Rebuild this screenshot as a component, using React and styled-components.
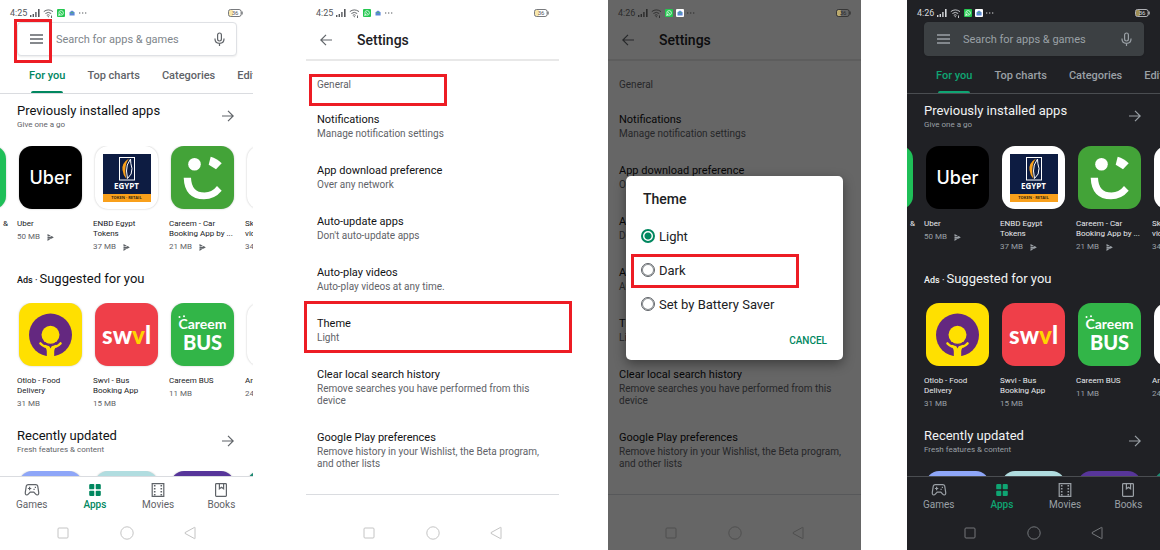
import React from "react";
import styled, { createGlobalStyle, ThemeProvider, css } from "styled-components";

const light = {
  bg: "#ffffff", search: "#ffffff", searchEdge: "#dfe1e5", title: "#111214", text: "#202124",
  muted: "#5f6368", placeholder: "#80868b", line: "#dadce0", accent: "#01875f", sys: "#c4c4c4",
  status: "#55585c", cardShadow: "0 0 2px rgba(0,0,0,.25)",
};
const dark = {
  bg: "#202125", search: "#3c4043", searchEdge: "#3c4043", title: "#f1f3f4", text: "#e8eaed",
  muted: "#9aa0a6", placeholder: "#9aa0a6", line: "#4a4d51", accent: "#0fa573", sys: "#74777b",
  status: "#d5d7da", cardShadow: "none",
};

const GlobalStyle = createGlobalStyle`
  * { box-sizing: border-box; }
  body { margin: 0; background: #fff; font-family: Roboto, "Liberation Sans", sans-serif; }
  button, input { font: inherit; color: inherit; }
  button { padding: 0; border: 0; background: none; cursor: pointer; }
  h1, h2, p { margin: 0; }
  svg { display: block; flex: none; }
`;

const Board = styled.main`
  display: flex;
  align-items: stretch;
`;

const Phone = styled.section`
  position: relative;
  flex: 1 1 0;
  min-width: 0;
  margin-left: ${(p) => p.$gap || 0}px;
  display: flex;
  flex-direction: column;
  background: ${(p) => p.theme.bg};
  color: ${(p) => p.theme.text};
`;

const Marker = styled.span`
  position: absolute;
  z-index: 3;
  inset: ${(p) => p.$inset};
  width: ${(p) => p.$width || "auto"};
  border: 3px solid #ed1c24;
  pointer-events: none;
`;

/* ---------- status and system bars ---------- */

const StatusRow = styled.div`
  position: relative;
  z-index: 2;
  height: 22px;
  padding: 4px 10px 0;
  display: flex;
  align-items: center;
  gap: 3px;
  font-size: 9px;
  line-height: 12px;
  color: ${(p) => (p.$dim ? "#2b2b2b" : p.theme.status)};
`;
const Spacer = styled.span`
  flex: 1;
`;

function StatusBar({ time, dim }) {
  return (
    <StatusRow $dim={dim}>
      <span>{time}</span>
      <svg width="10" height="8" viewBox="0 0 10 8" fill="currentColor">
        <path d="M0 6h1.4v2H0zM2.6 5H4v3H2.6zM5.2 3h1.4v5H5.2zM8 0h1.6v8H8z" />
      </svg>
      <svg width="11" height="9" viewBox="0 0 11 9" fill="none" stroke="currentColor">
        <path d="M.8 2.6Q5.3-.8 10 2.6M2.4 4.5Q5.3 2.2 8.2 4.5M3.8 6.3Q5.3 5.2 6.6 6.3" strokeWidth=".9" />
        <path d="M4.4 7.2h1.8L5.3 8.600zM8 6.400h.9V9H8z" fill="currentColor" stroke="none" />
      </svg>
      <svg width="8" height="8" viewBox="0 0 8 8">
        <rect width="8" height="8" rx="1" fill="#25c750" />
        <circle cx="4.1" cy="3.9" r="2.3" fill="none" stroke="#e9fff0" strokeWidth=".8" />
        <path d="M1.5 6.6l.5-1.5 1 1zM3.1 3q.4 1.5 1.9 1.9" fill="none" stroke="#e9fff0" strokeWidth=".7" />
      </svg>
      <svg width="8" height="8" viewBox="0 0 8 8">
        <rect width="8" height="8" rx="1" fill="#fff" />
        <path d="M1.5 3.2L4 1.4l2.6 1.8v3.2H1.5z" fill="#5b86d8" />
        <path d="M2.6 3.2h2.8v1H2.6z" fill="#50b070" />
      </svg>
      <svg width="8" height="2" viewBox="0 0 8 2" fill="currentColor">
        <path d="M0 .5h1.300v1H0zM3 .5h1.300v1H3zM6 .5h1.300v1H6z" />
      </svg>
      <Spacer />
      <svg width="15" height="8" viewBox="0 0 15 8">
        <rect x="1" y="1" width="4" height="6" rx="1" fill="#f3d774" opacity=".6" />
        <rect x=".5" y=".5" width="12.6" height="7" rx="2" fill="none" stroke="currentColor" strokeWidth=".8" />
        <path d="M13.6 2.6h1v2.8h-1z" fill="currentColor" />
        <text x="7" y="6.200" fontSize="6" textAnchor="middle" fill="currentColor">36</text>
      </svg>
    </StatusRow>
  );
}

const SystemRow = styled.div`
  height: 35px;
  padding: 0 12.5%;
  display: grid;
  grid-template-columns: repeat(3, 1fr);
  color: ${(p) => (p.theme.sys)};
  button { display: grid; place-items: center; }
`;

function SystemBar() {
  const pic = { width: 14, height: 14, viewBox: "0 0 14 14", fill: "none", stroke: "currentColor" };
  return (
    <SystemRow>
      <button aria-label="Recent"><svg {...pic}><rect x="2" y="2" width="10" height="10" rx="1" /></svg></button>
      <button aria-label="Home"><svg {...pic}><circle cx="7" cy="7" r="6.2" /></svg></button>
      <button aria-label="Back"><svg {...pic}><path d="M12 1.6v10.8q0 .5-.5.2L2 7.4q-.6-.4 0-.8l9.500-5.200q.5-.3.5.2z" /></svg></button>
    </SystemRow>
  );
}

/* ---------- store screen ---------- */

const SearchBar = styled.div`
  position: relative;
  height: 34px;
  margin: 0 16px 0 17px;
  padding: 0 10px 0 12px;
  display: flex;
  align-items: center;
  gap: 13px;
  border: 1px solid ${(p) => p.theme.searchEdge};
  border-radius: 4px;
  background: ${(p) => p.theme.search};
  color: ${(p) => p.theme.muted};
  box-shadow: 0 1px 2px rgba(0, 0, 0, 0.08);
`;
const SearchInput = styled.input`
  flex: 1;
  min-width: 0;
  width: 0;
  padding: 0;
  border: 0;
  outline: 0;
  background: none;
  font-size: 11px;
  &::placeholder { color: ${(p) => p.theme.placeholder}; opacity: 1; }
`;

const Tabs = styled.nav`
  height: 38px;
  padding-left: 29px;
  display: flex;
  gap: 22px;
  overflow: hidden;
  border-bottom: 1px solid ${(p) => p.theme.line};
`;
const Tab = styled.button`
  position: relative;
  flex: none;
  font-size: 11px;
  line-height: 16px;
  padding-top: 2px;
  font-weight: 500;
  color: ${(p) => (p.$active ? p.theme.accent : p.theme.muted)};
  ${(p) => p.$active && css`
    &::after {
      content: "";
      position: absolute;
      inset: auto 2px 0 2px;
      height: 2px;
      border-radius: 2px 2px 0 0;
      background: ${p.theme.accent};
    }
  `}
`;

const SectionHead = styled.header`
  padding: ${(p) => p.$top}px 19px 0 17px;
  margin-bottom: ${(p) => p.$bottom}px;
  display: flex;
  align-items: center;
  justify-content: space-between;
  color: ${(p) => p.theme.muted};
`;
const SectionTitle = styled.h2`
  height: 18px;
  display: flex;
  align-items: baseline;
  gap: 2px;
  font-size: 13px;
  line-height: 18px;
  font-weight: 400;
  white-space: nowrap;
  color: ${(p) => p.theme.title};
`;
const AdsTag = styled.small`
  font-size: 9px;
  font-weight: 500;
`;
const SectionSub = styled.p`
  font-size: 8px;
  line-height: 10px;
`;

const Carousel = styled.div`
  display: flex;
  overflow: hidden;
  height: ${(p) => p.$height || "auto"};
  padding-left: 17px;
`;
const Card = styled.article`
  flex: 0 0 76px;
`;
const PeekCard = styled.div`
  flex: 0 0 76px;
  margin-left: -76px;
`;
const Tile = styled.div`
  position: relative;
  flex: none;
  width: 63px;
  height: 63px;
  margin-left: 2px;
  margin-right: 11px;
  display: flex;
  flex-direction: column;
  align-items: center;
  justify-content: center;
  border-radius: 13px;
  background: ${(p) => p.$bg};
  color: #fff;
  box-shadow: ${(p) => p.theme.cardShadow};
`;
const CardText = styled.p`
  padding-top: 10px;
  font-size: 8px;
  line-height: 10px;
  white-space: pre;
  text-align: ${(p) => p.$align || "left"};
  margin-right: ${(p) => (p.$align ? 9 : 0)}px;
`;
const CardSize = styled.p`
  padding-top: 3px;
  display: flex;
  align-items: center;
  gap: 7px;
  font-size: 8px;
  line-height: 10px;
  color: ${(p) => p.theme.muted};
`;

const Word = styled.span`
  font-family: ${(p) => p.$font || "Lato"}, sans-serif;
  font-size: ${(p) => p.$size}px;
  line-height: ${(p) => p.$line || p.$size}px;
  font-weight: ${(p) => p.$weight || 700};
`;
const Yellow = styled.span`
  color: #ffd500;
`;
const BusLogo = styled.div`
  position: relative;
  display: flex;
  flex-direction: column;
  align-items: center;
  padding-bottom: 4px;
`;
const BusEyes = styled.svg`
  position: absolute;
  top: 0;
  left: 0;
`;
const Plate = styled.div`
  width: 48px;
  height: 48px;
  display: flex;
  flex-direction: column;
  align-items: center;
  background: #0d1c42;
`;
const PlateFoot = styled.div`
  width: 100%;
  margin-top: auto;
  height: 8px;
  display: grid;
  place-items: center;
  background: #f9a01b;
  color: #33260f;
`;

const art = {
  uber: ["#000", <Word $size={18} $weight={500} $font="Inter">Uber</Word>],
  egypt: ["#fff", (
    <Plate>
      <svg width="18" height="28" viewBox="0 0 18 28">
        <rect x="1.500" y="3.500" width="15" height="22.500" fill="none" stroke="#fff" />
        <path d="M11 4.500Q3.500 9 4.500 16q.5 5 4 9-1.500-5-1.200-9 .2-7 3.700-11.500z" fill="#f9a01b" />
        <path d="M12.500 5q-4.500 6-4 12l1 7.500q5-4 4.500-10-1.500-5-1.500-9.500z" fill="none" stroke="#fff" />
      </svg>
      <Word $size={8} $font="Open Sans">EGYPT</Word>
      <PlateFoot><Word $size={4} $font="Open Sans">TOKEN · RETAIL</Word></PlateFoot>
    </Plate>
  )],
  careem: ["#43a338", (
    <svg width="63" height="63" viewBox="0 0 63 63" fill="#fff">
      <circle cx="23.500" cy="18.300" r="6.300" />
      <path d="M39.700 10.700q6 1.500 11 6.600l-5.700 6-7.300-4.600z" />
      <path d="M12.700 31.700H20q.5 14.800 13.500 14.800 7.500 0 12.500-6.500l4.700 4.700Q43.500 53.300 33 53.300 13.500 53 12.700 31.700z" />
    </svg>
  )],
  otlob: ["#ffe000", (
    <svg width="63" height="63" viewBox="0 0 63 63">
      <circle cx="31.500" cy="32" r="21.500" fill="#642880" />
      <circle cx="31.500" cy="31.800" r="9" fill="#ffe000" />
      <path d="M21.500 40.500q2 2.200 4.500 3M41.500 40.500q-2 2.200-4.500 3" fill="none" stroke="#ffe000" strokeWidth="2.600" strokeLinecap="round" />
      <path d="M24 42.500l5.500-1.500 2 2.200 2-2.200 5.500 1.500q-3.800 2.500-3.800 6V55h-7.400v-6.500q0-3.500-3.800-6z" fill="#ffe000" />
      <path d="M25.500 39.500q2.500 3 6 3t6-3" fill="none" stroke="#642880" strokeWidth="1.800" />
      <path d="M30 42.500h3l-1.500 3z" fill="#642880" />
    </svg>
  )],
  swvl: ["#ef3f49", <Word $size={24} $weight={900}>sw<Yellow>v</Yellow>l</Word>],
  bus: ["#32b548", (
    <BusLogo>
      <BusEyes width="9" height="4" viewBox="0 0 9 4" fill="#fff">
        <circle cx="1.500" cy="2" r="1" /><circle cx="6" cy="1.300" r="1" />
      </BusEyes>
      <Word $size={14} $line={18}>Careem</Word>
      <Word $size={20} $line={18} $weight={900}>BUS</Word>
    </BusLogo>
  )],
};

const PlayMark = () => (
  <svg width="7" height="7" viewBox="0 0 7 7" fill="currentColor">
    <path d="M.5.1L3.800 1.800 2 2.500.5 2.400zM.500 2.900l2.200.1 2.100-.9 2 1.300-2.600 1.300H.500zM.500 5.100h2.900L.500 6.900z" />
  </svg>
);

const ArrowRight = () => (
  <svg width="12" height="12" viewBox="0 0 12 12" fill="none" stroke="currentColor" strokeWidth="1.200">
    <path d="M0 6h11M6 .8L11.200 6 6 11.200" />
  </svg>
);

const AppCard = ({ icon, name, size, mark }) => (
  <Card>
    <Tile $bg={icon ? art[icon][0] : "#fff"}>{icon && art[icon][1]}</Tile>
    <CardText>{name}</CardText>
    <CardSize>{size}{mark && <PlayMark />}</CardSize>
  </Card>
);

const BottomNav = styled.nav`
  height: 39px;
  padding-top: 5px;
  display: grid;
  grid-template-columns: repeat(4, 1fr);
  border-top: 1px solid ${(p) => p.theme.line};
`;
const NavItem = styled.button`
  display: flex;
  flex-direction: column;
  align-items: center;
  font-size: 10px;
  line-height: 14px;
  font-weight: ${(p) => (p.$active ? 500 : 400)};
  color: ${(p) => (p.$active ? p.theme.accent : p.theme.muted)};
`;

const navItems = [
  ["Games", (
    <g fill="none" stroke="currentColor" strokeWidth="1.200">
      <path d="M4.200 2.600h7.600q1.500 0 1.900 1.400l1 6.300q.3 2.700-1.500 2.700-.8 0-1.500-.8l-1.900-2H6.200l-1.900 2q-.7.800-1.500.8-1.800 0-1.500-2.700l1-6.300q.4-1.400 1.900-1.400z" />
      <path d="M5.600 4.800v3.400M3.900 6.500h3.400M9.500 7.300h1.200M10.800 5.400H12" />
    </g>
  )],
  ["Apps", <path d="M3.500 2h3q.8 0 .8.800v3.700q0 .8-.8.800h-3.300q-1 0-1-.9V3.200Q2.200 2 3.500 2zM9.500 2h3q1.300 0 1.300 1.200v3.200q0 .9-1 .9H9.500q-.8 0-.8-.8V2.800q0-.8.800-.8zM3.200 8.700h3.300q.8 0 .8.800v3.700q0 .8-.8.800h-3q-1.300 0-1.300-1.200V9.600q0-.9 1-.9zM9.500 8.700h3.300q1 0 1 .9v3.200q0 1.200-1.300 1.200h-3q-.8 0-.8-.8V9.500q0-.8.800-.8z" fill="currentColor" />],
  ["Movies", (
    <g fill="none" stroke="currentColor" strokeWidth="1.200">
      <path d="M2.200 1.600h11.600v12.800H2.200z" />
      <path d="M4.700 3v10.500M11.300 3v10.500" strokeWidth="1.600" strokeDasharray="1.500 1.500" />
    </g>
  )],
  ["Books", (
    <g fill="none" stroke="currentColor" strokeWidth="1.200">
      <rect x="2.600" y="1.600" width="10.800" height="12.800" rx=".8" />
      <path d="M6.400 1.600v5.200l2.100-1.600 2.100 1.600V1.600" />
    </g>
  )],
];

function StoreScreen({ time, theme, gap, marked }) {
  return (
    <ThemeProvider theme={theme}>
      <Phone $gap={gap}>
        <StatusBar time={time} />
        <SearchBar>
          <button aria-label="Menu">
            <svg width="13" height="10" viewBox="0 0 13 10" fill="none" stroke="currentColor" strokeWidth="1.500">
              <path d="M0 1h13M0 5h13M0 9h13" />
            </svg>
          </button>
          <SearchInput aria-label="Search" placeholder="Search for apps & games" />
          <button aria-label="Voice search">
            <svg width="13" height="15" viewBox="0 0 13 15" fill="none" stroke="currentColor" strokeWidth="1.200">
              <rect x="4.600" y="1" width="3.800" height="8" rx="1.900" />
              <path d="M2 6.500v.6q0 4.300 4.500 4.300T11 7.100v-.6M6.500 11.400V14" />
            </svg>
          </button>
          {marked && <Marker $inset="-4px auto -8px -4px" $width="38px" />}
        </SearchBar>
        <Tabs>
          <Tab $active>For you</Tab>
          <Tab>Top charts</Tab>
          <Tab>Categories</Tab>
          <Tab>Edit</Tab>
        </Tabs>
        <SectionHead $top={8} $bottom={16}>
          <div>
            <SectionTitle>Previously installed apps</SectionTitle>
            <SectionSub>Give one a go</SectionSub>
          </div>
          <ArrowRight />
        </SectionHead>
        <Carousel>
          <PeekCard>
            <Tile $bg="#1fbf58" />
            <CardText $align="right">&amp;</CardText>
          </PeekCard>
          <AppCard icon="uber" name="Uber" size="50 MB" mark />
          <AppCard icon="egypt" name={"ENBD Egypt\nTokens"} size="37 MB" mark />
          <AppCard icon="careem" name={"Careem - Car\nBooking App by ..."} size="21 MB" mark />
          <AppCard name={"Sk\nvid"} size="34" />
        </Carousel>
        <SectionHead $top={18} $bottom={15}>
          <SectionTitle><AdsTag>Ads ·</AdsTag>Suggested for you</SectionTitle>
        </SectionHead>
        <Carousel>
          <AppCard icon="otlob" name={"Otlob - Food\nDelivery"} size="31 MB" />
          <AppCard icon="swvl" name={"Swvl - Bus\nBooking App"} size="15 MB" />
          <AppCard icon="bus" name="Careem BUS" size="11 MB" />
          <AppCard name="An" size="24" />
        </Carousel>
        <SectionHead $top={18} $bottom={16}>
          <div>
            <SectionTitle>Recently updated</SectionTitle>
            <SectionSub>Fresh features &amp; content</SectionSub>
          </div>
          <ArrowRight />
        </SectionHead>
        <Carousel $height="5px">
          <Tile $bg="#8ea6f8" />
          <Tile $bg="#b1dde0" />
          <Tile $bg="#57359a" />
          <Tile $bg="#1b8a72" />
        </Carousel>
        <BottomNav>
          {navItems.map(([label, icon]) => (
            <NavItem key={label} $active={label === "Apps"}>
              <svg width="16" height="16" viewBox="0 0 16 16">{icon}</svg>
              {label}
            </NavItem>
          ))}
        </BottomNav>
        <SystemBar />
      </Phone>
    </ThemeProvider>
  );
}

/* ---------- settings screen ---------- */

const SettingsHead = styled.header`
  height: 39px;
  padding: 0 14px 2px;
  display: flex;
  align-items: center;
  gap: 25px;
  border-bottom: 2px solid #e8e8e8;
  color: ${(p) => p.theme.muted};
`;
const SettingsTitle = styled.h1`
  font-size: 14px;
  line-height: 18px;
  font-weight: 500;
  color: ${(p) => p.theme.text};
`;
const GroupTitle = styled.h2`
  position: relative;
  margin: 17px 0 20px;
  padding-left: 11px;
  font-size: 10px;
  line-height: 14px;
  font-weight: 400;
  color: ${(p) => p.theme.muted};
`;
const Setting = styled.div`
  position: relative;
  padding: 0 16px 23px 11px;
  font-size: 10px;
  line-height: 12px;
  color: ${(p) => p.theme.muted};
`;
const SettingName = styled.div`
  font-size: 11px;
  line-height: 16px;
  color: ${(p) => p.theme.title};
`;
const Rule = styled.div`
  margin: 1px 0 20px;
  height: 1px;
  background: ${(p) => p.theme.line};
`;

const settings = [
  ["Notifications", "Manage notification settings"],
  ["App download preference", "Over any network"],
  ["Auto-update apps", "Don't auto-update apps"],
  ["Auto-play videos", "Auto-play videos at any time."],
  ["Theme", "Light"],
  ["Clear local search history", "Remove searches you have performed from this device"],
  ["Google Play preferences", "Remove history in your Wishlist, the Beta program, and other lists"],
];

function SettingsScreen({ time, gap, marked, children }) {
  return (
    <ThemeProvider theme={light}>
      <Phone $gap={gap}>
        <StatusBar time={time} dim={!!children} />
        <SettingsHead>
          <button aria-label="Back">
            <svg width="12" height="12" viewBox="0 0 12 12" fill="none" stroke="currentColor" strokeWidth="1.200">
              <path d="M12 6H1M6 .8L.8 6 6 11.200" />
            </svg>
          </button>
          <SettingsTitle>Settings</SettingsTitle>
        </SettingsHead>
        <GroupTitle>
          General
          {marked && <Marker $inset="-4px auto -14px 3px" $width="138px" />}
        </GroupTitle>
        {settings.map(([name, note]) => (
          <Setting key={name}>
            <SettingName>{name}</SettingName>
            {note}
            {marked && name === "Theme" && <Marker $inset="-15px -13px 14px -2px" />}
          </Setting>
        ))}
        <Rule />
        <SystemBar />
        {children}
      </Phone>
    </ThemeProvider>
  );
}

const Scrim = styled.div`
  position: absolute;
  inset: 0;
  z-index: 1;
  padding: 176px 18px 0 18px;
  background: rgba(0, 0, 0, 0.6);
`;
const Dialog = styled.form`
  padding: 14px 16px 11px 15px;
  display: flex;
  flex-direction: column;
  border-radius: 5px;
  background: #fff;
  color: #202124;
  box-shadow: 0 4px 12px rgba(0, 0, 0, 0.4);
`;
const DialogTitle = styled.h2`
  margin: 0 0 11px 2px;
  font-size: 14px;
  line-height: 18px;
  font-weight: 500;
`;
const Choice = styled.label`
  position: relative;
  height: 34px;
  display: flex;
  align-items: center;
  gap: 4px;
  font-size: 13px;
`;
const Radio = styled.input`
  appearance: none;
  width: 14px;
  height: 14px;
  margin: 0;
  border: 1px solid #5f6368;
  border-radius: 50%;
  box-shadow: inset 0 0 0 1px #8d9194;
  &:checked {
    border: 2px solid #01875f;
    box-shadow: none;
    background: radial-gradient(#01875f 0 3px, #fff 4px);
  }
`;
const Cancel = styled.button`
  align-self: flex-end;
  margin-top: 12px;
  font-size: 10px;
  line-height: 16px;
  font-weight: 500;
  color: #01875f;
`;

export default function App() {
  return (
    <>
      <GlobalStyle />
      <Board>
        <StoreScreen time="4:25" theme={light} marked />
        <SettingsScreen time="4:25" gap={53} marked />
        <SettingsScreen time="4:26" gap={49}>
          <Scrim>
            <Dialog onSubmit={(e) => e.preventDefault()}>
              <DialogTitle>Theme</DialogTitle>
              <Choice><Radio type="radio" name="theme" defaultChecked />Light</Choice>
              <Choice>
                <Radio type="radio" name="theme" />Dark
                <Marker $inset="1px 28px -1px -10px" />
              </Choice>
              <Choice><Radio type="radio" name="theme" />Set by Battery Saver</Choice>
              <Cancel type="button">CANCEL</Cancel>
            </Dialog>
          </Scrim>
        </SettingsScreen>
        <StoreScreen time="4:26" theme={dark} gap={46} />
      </Board>
    </>
  );
}
